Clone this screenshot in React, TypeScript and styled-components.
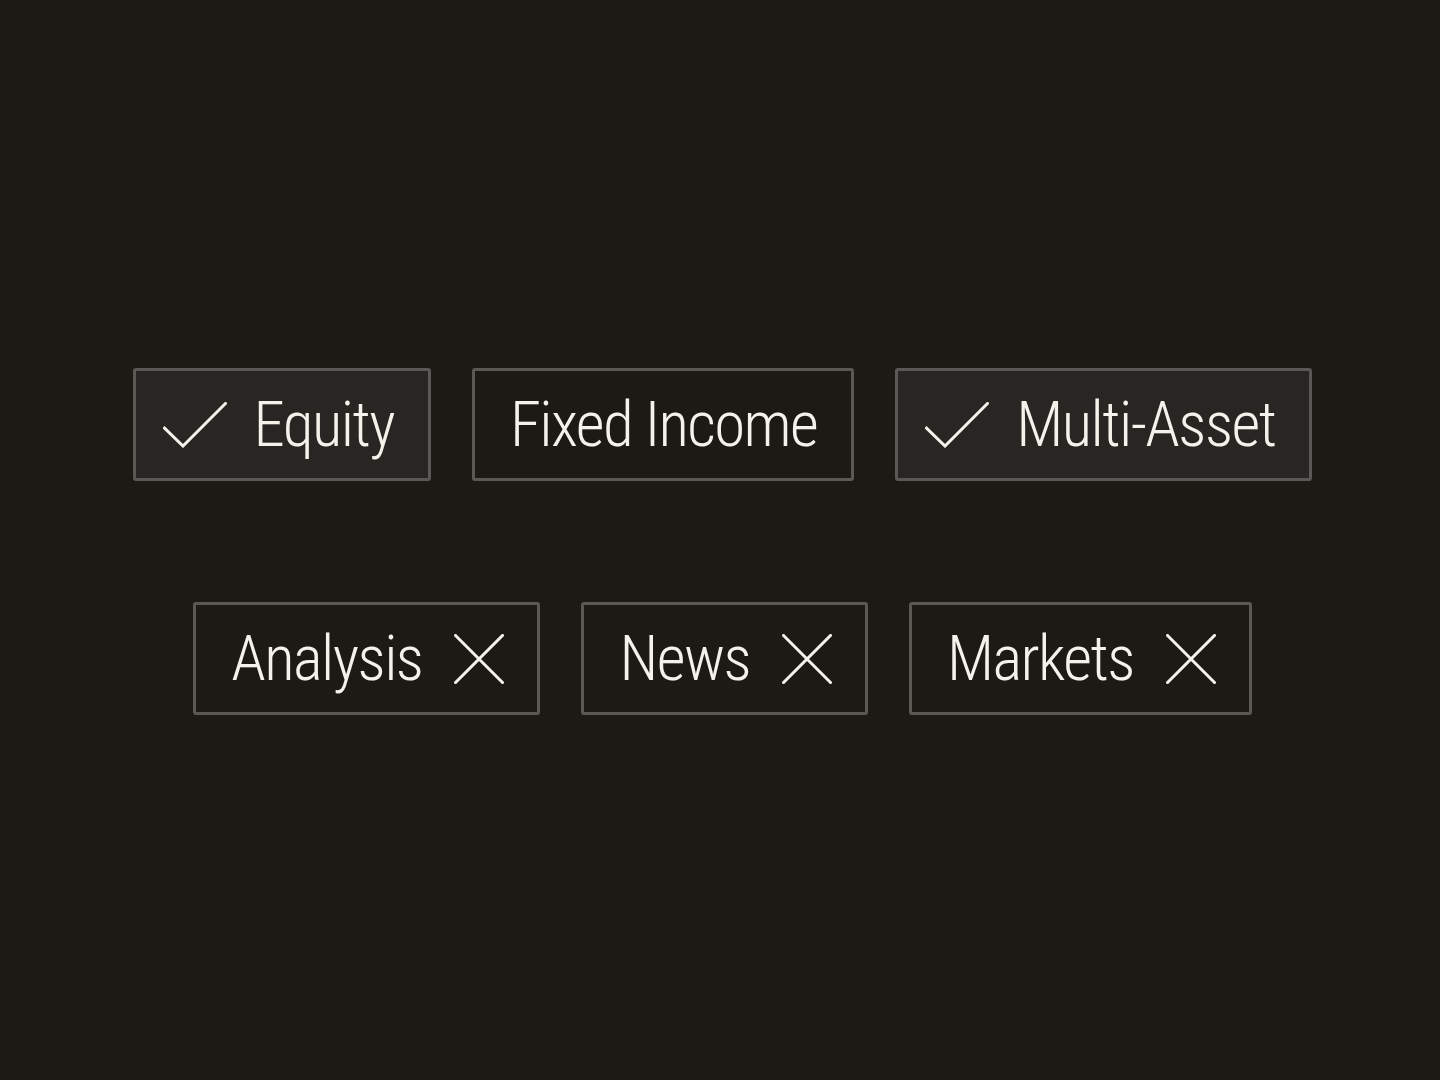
import styled, { createGlobalStyle } from "styled-components";

const GlobalStyle = createGlobalStyle`
  html, body {
    margin: 0;
    padding: 0;
    background: #1d1a16;
  }
  #root {
    min-height: 100vh;
  }
`;

type Tag = { label: string; selected?: boolean; removable?: boolean };

const topTags: Tag[] = [
  { label: "Equity", selected: true },
  { label: "Fixed Income" },
  { label: "Multi-Asset", selected: true },
];

const bottomTags: Tag[] = [
  { label: "Analysis", removable: true },
  { label: "News", removable: true },
  { label: "Markets", removable: true },
];

const CheckIcon = () => (
  <svg width="64" height="46" viewBox="0 0 64 46" fill="none">
    <path
      d="M1.5 26 L20 44 L62.5 1.5"
      stroke="currentColor"
      strokeWidth="3"
      strokeLinecap="square"
    />
  </svg>
);

const CloseIcon = () => (
  <svg width="50" height="50" viewBox="0 0 50 50" fill="none">
    <path
      d="M1.5 1.5 L48.5 48.5 M48.5 1.5 L1.5 48.5"
      stroke="currentColor"
      strokeWidth="3"
      strokeLinecap="square"
    />
  </svg>
);

export default function App() {
  return (
    <>
      <GlobalStyle />
      <Page>
        <Rows>
          <Row>
            {topTags.map((t) => (
              <Chip key={t.label} selected={!!t.selected} lead={!!t.selected} trail={false}>
                {t.selected && <CheckIcon />}
                <Label>{t.label}</Label>
              </Chip>
            ))}
          </Row>
          <Row>
            {bottomTags.map((t) => (
              <Chip key={t.label} selected={false} lead={false} trail={!!t.removable}>
                <Label>{t.label}</Label>
                {t.removable && (
                  <RemoveButton aria-label={`Remove ${t.label}`}>
                    <CloseIcon />
                  </RemoveButton>
                )}
              </Chip>
            ))}
          </Row>
        </Rows>
      </Page>
    </>
  );
}

const Page = styled.div`
  height: 1080px;
  display: flex;
  align-items: center;
  justify-content: center;
  padding-left: 5px;
  box-sizing: border-box;
`;

const Rows = styled.div`
  display: flex;
  flex-direction: column;
  align-items: center;
  gap: 121px;
  margin-top: 3px;
`;

const Row = styled.div`
  display: flex;
  gap: 41px;
`;

const Chip = styled.div<{ selected: boolean; lead: boolean; trail: boolean }>`
  height: 113px;
  box-sizing: border-box;
  display: inline-flex;
  align-items: center;
  gap: ${({ trail }) => (trail ? "32px" : "27px")};
  padding: 0 ${({ trail }) => (trail ? "33px" : "34px")} 0
    ${({ lead }) => (lead ? "27px" : "35px")};
  border: 3px solid #5a5854;
  border-radius: 3px;
  background: ${({ selected }) => (selected ? "#272622" : "transparent")};
  color: #f4f2eb;

  svg {
    flex-shrink: 0;
  }
`;

const Label = styled.span`
  font-family: "Roboto Condensed", "Roboto", "Open Sans", sans-serif;
  font-stretch: condensed;
  font-size: 63px;
  letter-spacing: -1.6px;
  line-height: 1;
  font-weight: 300;
  white-space: nowrap;
`;

const RemoveButton = styled.span`
  display: inline-flex;
  color: #f4f2eb;
`;
